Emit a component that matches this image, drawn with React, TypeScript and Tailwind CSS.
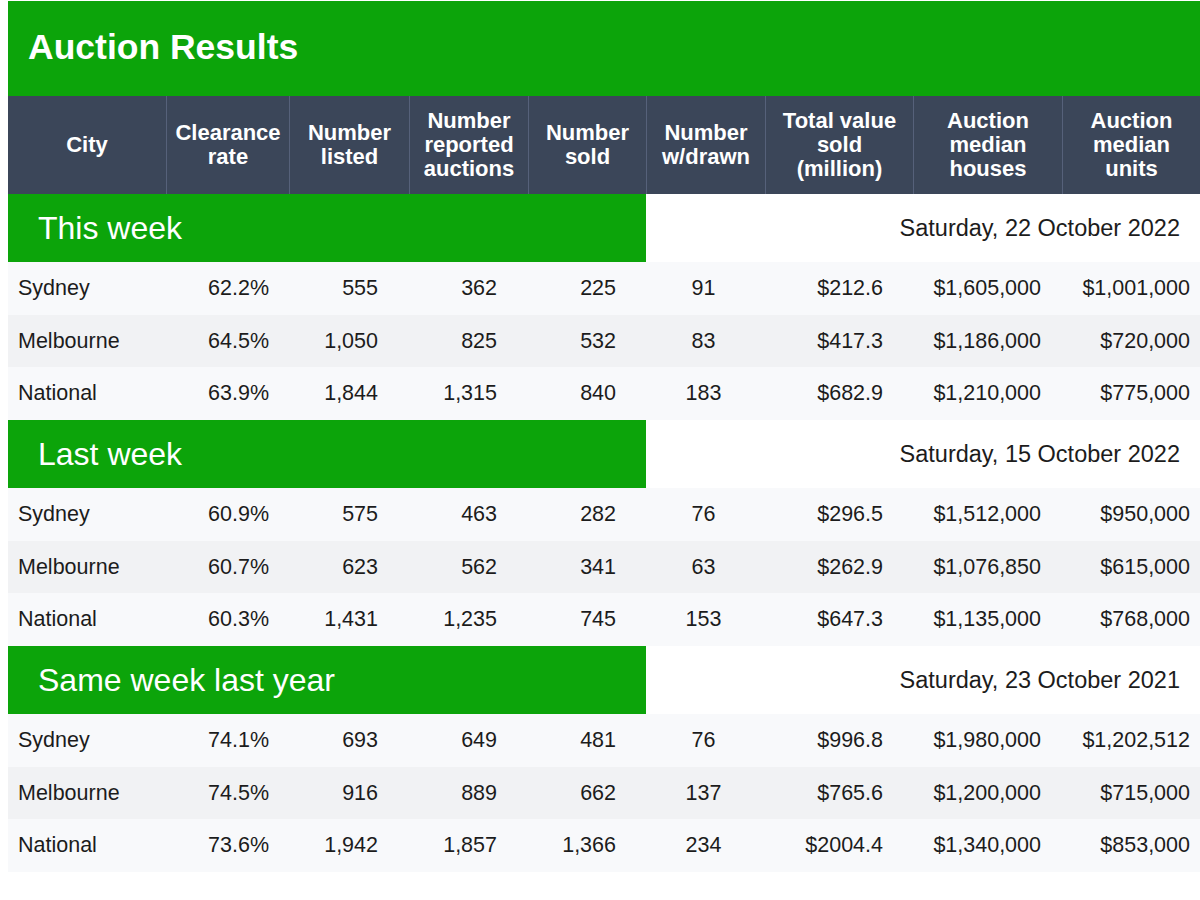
const cols = 'grid grid-cols-[158px_123px_120px_119px_118px_119px_148px_149px_138px]';

const headers = [
  ['City'],
  ['Clearance', 'rate'],
  ['Number', 'listed'],
  ['Number', 'reported', 'auctions'],
  ['Number', 'sold'],
  ['Number', 'w/drawn'],
  ['Total value', 'sold', '(million)'],
  ['Auction', 'median', 'houses'],
  ['Auction', 'median', 'units'],
];

// per-column cell alignment/padding
const cellCls = [
  'justify-start pl-[10px]',
  'justify-end pr-[20px]',
  'justify-end pr-[31px]',
  'justify-end pr-[31px]',
  'justify-end pr-[30px]',
  'justify-center pr-[4px]',
  'justify-end pr-[30px]',
  'justify-end pr-[21px]',
  'justify-end pr-[10px]',
];

type Section = { label: string; date: string; rows: string[][] };

const sections: Section[] = [
  {
    label: 'This week',
    date: 'Saturday, 22 October 2022',
    rows: [
      ['Sydney', '62.2%', '555', '362', '225', '91', '$212.6', '$1,605,000', '$1,001,000'],
      ['Melbourne', '64.5%', '1,050', '825', '532', '83', '$417.3', '$1,186,000', '$720,000'],
      ['National', '63.9%', '1,844', '1,315', '840', '183', '$682.9', '$1,210,000', '$775,000'],
    ],
  },
  {
    label: 'Last week',
    date: 'Saturday, 15 October 2022',
    rows: [
      ['Sydney', '60.9%', '575', '463', '282', '76', '$296.5', '$1,512,000', '$950,000'],
      ['Melbourne', '60.7%', '623', '562', '341', '63', '$262.9', '$1,076,850', '$615,000'],
      ['National', '60.3%', '1,431', '1,235', '745', '153', '$647.3', '$1,135,000', '$768,000'],
    ],
  },
  {
    label: 'Same week last year',
    date: 'Saturday, 23 October 2021',
    rows: [
      ['Sydney', '74.1%', '693', '649', '481', '76', '$996.8', '$1,980,000', '$1,202,512'],
      ['Melbourne', '74.5%', '916', '889', '662', '137', '$765.6', '$1,200,000', '$715,000'],
      ['National', '73.6%', '1,942', '1,857', '1,366', '234', '$2004.4', '$1,340,000', '$853,000'],
    ],
  },
];

const rowBg = ['bg-[#f8f9fb]', 'bg-[#f1f2f4]', 'bg-[#f8f9fb]'];
const rowH = ['h-[53px]', 'h-[52px]', 'h-[53px]'];

export default function App() {
  return (
    <div className="w-[1200px] h-[900px] bg-white font-['Liberation_Sans',Arial,sans-serif] text-[#1c1c1c] pl-[8px] pt-px overflow-hidden">
      <div className="w-[1192px]">
        <div className="h-[95px] bg-[#0ca40a] flex items-center pl-[20px] pb-[2px]">
          <h1 className="text-white font-bold text-[35.5px]">Auction Results</h1>
        </div>

        <div className={`${cols} h-[98px] bg-[#3b4659]`}>
          {headers.map((h, i) => (
            <div
              key={i}
              className={`flex flex-col items-center justify-center text-white font-bold text-[22px] leading-[24px] text-center ${i > 0 ? 'border-l border-[#56617a]' : ''}`}
            >
              {h.map((line) => (
                <span key={line}>{line}</span>
              ))}
            </div>
          ))}
        </div>

        {sections.map((s) => (
          <div key={s.label}>
            <div className={`${cols} h-[68px]`}>
              <div className="col-span-5 bg-[#0ca40a] flex items-center pl-[30px]">
                <span className="text-white text-[32px]">{s.label}</span>
              </div>
              <div className="col-span-4 flex items-center justify-end pr-[20px] pt-[2px] text-[23.5px]">
                {s.date}
              </div>
            </div>
            {s.rows.map((r, ri) => (
              <div key={ri} className={`${cols} ${rowH[ri]} ${rowBg[ri]}`}>
                {r.map((v, ci) => (
                  <div key={ci} className={`flex items-center text-[21.5px] ${cellCls[ci]}`}>
                    {v}
                  </div>
                ))}
              </div>
            ))}
          </div>
        ))}
      </div>
    </div>
  );
}
